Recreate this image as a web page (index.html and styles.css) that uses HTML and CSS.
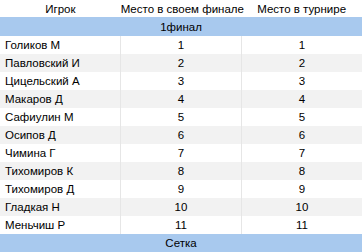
FILE: index.html
```html
<!DOCTYPE html>
<html>
<head>
<meta charset="utf-8">
<link rel="stylesheet" href="styles.css">
</head>
<body>
<table class="results">
  <thead>
    <tr class="head"><th>Игрок</th><th>Место в своем финале</th><th>Место в турнире</th></tr>
  </thead>
  <tbody>
    <tr class="group"><td colspan="3">1финал</td></tr>
    <tr><td class="name">Голиков М</td><td>1</td><td>1</td></tr>
    <tr><td class="name">Павловский И</td><td>2</td><td>2</td></tr>
    <tr><td class="name">Цицельский А</td><td>3</td><td>3</td></tr>
    <tr><td class="name">Макаров Д</td><td>4</td><td>4</td></tr>
    <tr><td class="name">Сафиулин М</td><td>5</td><td>5</td></tr>
    <tr><td class="name">Осипов Д</td><td>6</td><td>6</td></tr>
    <tr><td class="name">Чимина Г</td><td>7</td><td>7</td></tr>
    <tr><td class="name">Тихомиров К</td><td>8</td><td>8</td></tr>
    <tr><td class="name">Тихомиров Д</td><td>9</td><td>9</td></tr>
    <tr><td class="name">Гладкая Н</td><td>10</td><td>10</td></tr>
    <tr><td class="name">Меньчиш Р</td><td>11</td><td>11</td></tr>
    <tr class="group"><td colspan="3">Сетка</td></tr>
  </tbody>
</table>
</body>
</html>
```
FILE: styles.css
```css
html, body {
  margin: 0;
  padding: 0;
  background: #ffffff;
}
.results {
  width: 362px;
  border-collapse: collapse;
  table-layout: fixed;
  font-family: "Liberation Sans", Arial, sans-serif;
  font-size: 11.5px;
  color: #000;
}
.results th, .results td {
  padding: 0;
  text-align: center;
  font-weight: normal;
  white-space: nowrap;
}
.results th {
  height: 17px;
  background: #ffffff;
}
.results tbody tr td {
  height: 18px;
  border-left: 1px solid #e6e6e6;
}
.results tbody tr td:first-child {
  border-left: none;
}
.results tbody tr:nth-child(odd) td {
  background: #f2f2f2;
}
.results tbody tr:nth-child(even) td {
  background: #ffffff;
}
.results tbody tr.group td {
  background: #a8c9ee;
  height: 19px;
  border-left: none;
}
.results tbody tr:last-child.group td {
  height: 18px;
}
.results td.name {
  text-align: left;
  padding-left: 5px;
}
```
